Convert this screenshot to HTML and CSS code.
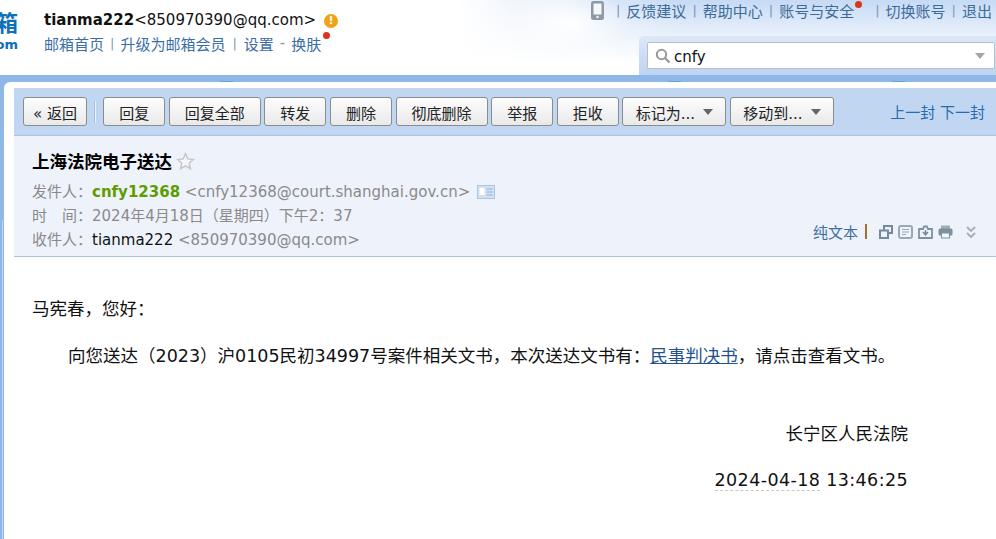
FILE: index.html
```html
<!DOCTYPE html>
<html>
<head>
<title>QQ Mail</title>
<link rel="stylesheet" href="styles.css">
</head>
<body>
  <div class="top">
    <div class="logo"><span class="logo-big">箱</span><span class="logo-small">om</span></div>
    <div class="user">
      <div class="user-name"><b>tianma222</b>&lt;850970390@qq.com&gt;<span class="warn">!</span></div>
      <div class="user-links">
        <a>邮箱首页</a><i>|</i><a>升级为邮箱会员</a><i class="wide">|</i><a>设置</a><em>-</em><a>换肤</a><span class="dot dot-skin"></span>
      </div>
    </div>
    <div class="top-right">
      <div class="top-links">
        <svg class="phone" width="13" height="19" viewBox="0 0 13 19"><rect x="0" y="0" width="13" height="19" rx="2.5" fill="#8e9aa3"/><rect x="2.500" y="2.500" width="8" height="11" fill="#f4f7fb"/><circle cx="6.500" cy="16" r="1.200" fill="#f4f7fb"/></svg>
        <i>|</i><a>反馈建议</a><i>|</i><a>帮助中心</a><i>|</i><a>账号与安全</a><span class="dot dot-safe"></span><i class="gap">|</i><a>切换账号</a><i>|</i><a>退出</a>
      </div>
      <div class="search-wrap">
        <div class="search">
          <svg width="16" height="16" viewBox="0 0 16 16"><circle cx="6.500" cy="6.500" r="4.700" fill="none" stroke="#9a9a9a" stroke-width="2"/><path d="M10 10l4.500 4.500" stroke="#9a9a9a" stroke-width="2.400"/></svg>
          <span class="search-text">cnfy</span>
          <span class="arrow arrow-light"></span>
        </div>
      </div>
    </div>
  </div>

  <div class="shell">
    <span class="tick tick-a"></span>
    <span class="tick tick-b"></span>
    <span class="tick tick-c"></span>
    <div class="frame">
      <div class="toolbar">
        <button class="btn btn-back">« 返回</button>
        <span class="sep"></span>
        <button class="btn w-62">回复</button>
        <button class="btn w-92">回复全部</button>
        <button class="btn w-62">转发</button>
        <button class="btn w-62">删除</button>
        <button class="btn w-92">彻底删除</button>
        <button class="btn w-62">举报</button>
        <button class="btn w-62">拒收</button>
        <button class="btn w-104">标记为...<span class="arrow"></span></button>
        <button class="btn w-104">移动到...<span class="arrow"></span></button>
        <div class="pager"><a>上一封</a> <a>下一封</a></div>
      </div>

      <div class="info">
        <h1 class="subject">上海法院电子送达<svg class="star" width="19" height="19" viewBox="0 0 19 19"><path d="M9.500 1.800l2.300 5.100 5.500.6-4.100 3.700 1.200 5.500-4.900-2.800-4.900 2.800 1.200-5.500-4.100-3.700 5.500-.6z" fill="#f5f6f8" stroke="#c6c6c6" stroke-width="1.500"/></svg></h1>
        <div class="meta">发件人：<b class="sender">cnfy12368</b> &lt;cnfy12368@court.shanghai.gov.cn&gt;
          <svg class="card" width="18" height="14" viewBox="0 0 18 14"><rect x="0.500" y="0.500" width="17" height="13" fill="#d3e2f1" stroke="#aac6df"/><rect x="2.500" y="3" width="5" height="7" fill="#fff"/><path d="M9.500 4h6M9.500 7h6M9.500 10h6" stroke="#8fb2d2"/></svg>
        </div>
        <div class="meta">时&emsp;间：2024年4月18日（星期四）下午2：37</div>
        <div class="meta">收件人：<span class="to">tianma222</span> &lt;850970390@qq.com&gt;</div>
        <div class="tools">
          <a>纯文本</a><span class="tools-sep"></span>
          <svg width="14" height="14" viewBox="0 0 14 14"><rect x="5" y="1" width="8" height="7" fill="#eef3fb" stroke="#74899a" stroke-width="2"/><rect x="1" y="5.500" width="8" height="7.500" fill="#eef3fb" stroke="#74899a" stroke-width="2"/></svg>
          <svg width="15" height="14" viewBox="0 0 15 14"><rect x="1" y="1" width="13" height="12" rx="2" fill="#eef3fb" stroke="#98a8b4" stroke-width="2"/><path d="M4 4.500h7M4 7h7M4 9.500h4" stroke="#98a8b4"/></svg>
          <svg width="15" height="14" viewBox="0 0 15 14"><path d="M1 4h4l1-2.500h3l1 2.500h4v9H1z" fill="#eef3fb" stroke="#7f929f" stroke-width="1.800"/><path d="M7.500 5v4M5 7l2.500 2.800L10 7" fill="none" stroke="#74899a" stroke-width="1.500"/></svg>
          <svg width="15" height="14" viewBox="0 0 15 14"><path d="M3 0.500h9v4H3z" fill="#a0aeb8"/><rect x="0.500" y="3.500" width="14" height="7" rx="1.500" fill="#7d909d"/><rect x="3.500" y="8" width="8" height="5" fill="#f2f5fa" stroke="#7d909d"/></svg>
          <svg class="more" width="12" height="14" viewBox="0 0 12 14"><path d="M2 2l4 4 4-4M2 8l4 4 4-4" fill="none" stroke="#a8adb0" stroke-width="1.800"/></svg>
        </div>
      </div>

      <div class="content">
        <p class="greet">马宪春，您好：</p>
        <p class="line">向您送达（2023）沪0105民初34997号案件相关文书，本次送达文书有：<a class="doc">民事判决书</a>，请点击查看文书。</p>
        <p class="court">长宁区人民法院</p>
        <p class="stamp"><span class="stamp-date">2024-04-18</span> 13:46:25</p>
      </div>
    </div>
  </div>
</body>
</html>
```

FILE: styles.css
```css
/* Page */
html, body {
  height: 100%;
}

body {
  display: flex;
  flex-direction: column;
  margin: 0;
  overflow: hidden;
  background: #fff;
  color: #000;
  font-family: "DejaVu Sans", "Noto Sans CJK SC", sans-serif;
  font-size: 15px;
}

a {
  text-decoration: none;
}

i, em {
  font-style: normal;
}

/* Top header */
.top {
  display: flex;
  flex: none;
  height: 75px;
  background:
    radial-gradient(ellipse 62px 34px at 568px 22px, rgba(255,255,255,0.95), rgba(255,255,255,0)),
    linear-gradient(to right, #fff 46%, rgba(255,255,255,0) 68%),
    linear-gradient(to bottom, #c6daf5, #e8f0fb 45%, #fff 85%);
}

.logo {
  width: 44px;
  flex: none;
  overflow: hidden;
  display: flex;
  flex-direction: column;
  align-items: flex-end;
  padding-right: 26px;
  box-sizing: border-box;
  color: #0d71b9;
  font-weight: bold;
}

.logo-big {
  font-size: 22px;
  line-height: 24px;
  margin-top: 12px;
}

.logo-small {
  font-size: 13px;
  line-height: 14px;
  margin-top: 2px;
}

.user {
  padding-top: 10px;
}

.user-name {
  display: flex;
  align-items: center;
  height: 20px;
  color: #111;
}

.warn {
  display: inline-block;
  width: 14px;
  height: 14px;
  margin: 1px 0 0 8px;
  border-radius: 50%;
  background: #f3a115;
  color: #fff;
  font-size: 11px;
  font-weight: bold;
  line-height: 14px;
  text-align: center;
}

.user-links {
  display: flex;
  align-items: center;
  height: 20px;
  margin-top: 3px;
  color: #3b6ea5;
}

.user-links i {
  margin: 0 6px;
  color: #7f9bb8;
  font-size: 13px;
}

.user-links i.wide {
  margin-left: 7px;
  margin-right: 7px;
}

.user-links em {
  margin: 0 6px;
  color: #7f9bb8;
}

.dot {
  width: 7px;
  height: 7px;
  border-radius: 50%;
  background: #d9361e;
  align-self: flex-start;
}

.dot-skin {
  margin: -1px 0 0 2px;
}

.dot-safe {
  margin: 1px 0 0 1px;
}

.top-right {
  margin-left: auto;
  width: 405px;
  display: flex;
  flex-direction: column;
  align-items: flex-end;
}

.top-links {
  display: flex;
  align-items: center;
  height: 20px;
  padding-right: 4px;
  color: #3d6b98;
  white-space: nowrap;
}

.top-links i {
  margin: 0 6px;
  color: #7d96ae;
  font-size: 13px;
}

.top-links i.gap {
  margin-left: 13px;
}

.phone {
  margin-right: 6px;
}

.search-wrap {
  width: 357px;
  height: 39px;
  margin-top: 16px;
  box-sizing: border-box;
  padding: 6px 0 0 8px;
  background: linear-gradient(to bottom, #dce8f8, #bdd4f0);
  border-top-left-radius: 5px;
}

.search {
  display: flex;
  align-items: center;
  height: 25px;
  padding-left: 7px;
  background: #fff;
  border: 1px solid #b9bfc6;
  border-radius: 2px;
  margin-right: 1px;
}

.search-text {
  margin-left: 3px;
  padding-top: 2px;
  color: #111;
}

/* Blue strip and frame */
.shell {
  position: relative;
  flex: 1;
  min-height: 0;
  padding: 7px 0 0 4px;
  background: linear-gradient(#bcd3ef, #bcd3ef) 2px 145px / 1px 100% no-repeat, #8fb7e8;
}

.tick {
  position: absolute;
  top: 6px;
  width: 13px;
  height: 1px;
  background: #6f9fd8;
}

.tick-a {
  left: 220px;
}

.tick-b {
  left: 668px;
}

.tick-c {
  left: 892px;
}

.frame {
  height: 100%;
  box-sizing: border-box;
  padding: 6px 0 0 10px;
  background: #fff;
  border-top-left-radius: 6px;
}

/* Toolbar */
.toolbar {
  display: flex;
  align-items: center;
  gap: 3.600px;
  height: 48px;
  padding-left: 9px;
  background: #c1d7f1;
  border-bottom: 1px solid #a9c4e3;
  box-sizing: border-box;
}

.btn {
  display: flex;
  align-items: center;
  justify-content: center;
  height: 29px;
  padding: 1px 0 0;
  background: linear-gradient(to bottom, #fdfdfd, #e9e9e9);
  border: 1px solid #8c8c8c;
  border-radius: 3px;
  color: #222;
  font-family: inherit;
  font-size: 15px;
}

.btn-back {
  width: 64px;
}

.sep {
  width: 1px;
  height: 22px;
  margin: 0 4px 0 3px;
  background: #e8f0fa;
  border-left: 1px solid #a8c0dc;
}

.w-62 {
  width: 62px;
}

.w-92 {
  width: 92px;
}

.w-104 {
  width: 104px;
}

.arrow {
  width: 0;
  height: 0;
  margin-left: 8px;
  border: 5px solid transparent;
  border-top: 6px solid #666;
  border-bottom: 0;
}

.arrow-light {
  margin-left: auto;
  margin-right: 9px;
  border-top-color: #a5a5a5;
}

.pager {
  margin-left: auto;
  padding-right: 11px;
  color: #2a6bb0;
}

/* Mail info */
.info {
  position: relative;
  height: 121px;
  box-sizing: border-box;
  padding: 14px 0 0 18px;
  background: #eef3fb;
  border-bottom: 1px solid #a9c4e0;
}

.subject {
  margin: 0 0 6px;
  height: 24px;
  font-size: 17.500px;
  font-weight: bold;
  line-height: 24px;
}

.star {
  margin-left: 4px;
  vertical-align: -3px;
}

.meta {
  height: 24px;
  color: #8a8a8a;
  line-height: 24px;
  white-space: nowrap;
}

.sender {
  color: #5e9c00;
}

.to {
  color: #111;
}

.card {
  margin-left: 2px;
  vertical-align: -2px;
}

.tools {
  position: absolute;
  right: 19px;
  top: 85px;
  display: flex;
  align-items: center;
  gap: 5px;
  color: #3d6ea5;
}

.tools-sep {
  width: 2px;
  height: 15px;
  margin: 0 7px 0 2px;
  background: #a9702a;
}

.more {
  margin-left: 7px;
}

/* Mail body */
.content {
  padding: 0 88px 0 18px;
  font-size: 17.500px;
  color: #111;
}

.content p {
  margin: 0;
}

.greet {
  padding-top: 41px;
  line-height: 22px;
}

.content .line {
  margin-top: 25px;
  padding-left: 36px;
  line-height: 22px;
  white-space: nowrap;
}

.doc {
  color: #24528f;
  text-decoration: underline;
}

.content .court {
  margin-top: 55px;
  line-height: 24px;
  text-align: right;
}

.content .stamp {
  margin-top: 22px;
  line-height: 24px;
  letter-spacing: 0.400px;
  text-align: right;
}

.stamp-date {
  border-bottom: 1px dashed #c8c8c8;
}
```
